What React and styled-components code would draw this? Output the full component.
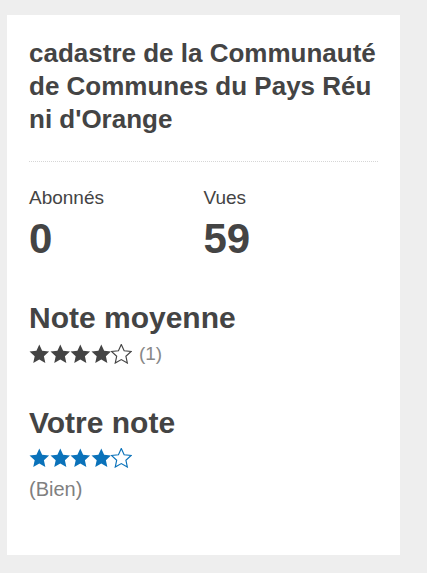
import React from 'react';
import styled, { createGlobalStyle } from 'styled-components';

const GlobalStyle = createGlobalStyle`
  body {
    margin: 0;
    background: #eeeeee;
    font-family: "Liberation Sans", Arial, sans-serif;
    color: #444444;
  }
`;

const Page = styled.div`
  padding: 15px 0 0 7px;
  min-height: 573px;
  box-sizing: border-box;
`;

const Card = styled.div`
  width: 393px;
  height: 540px;
  box-sizing: border-box;
  background: #ffffff;
  padding: 22px 22px;
`;

const Title = styled.h1`
  margin: 0;
  font-size: 26px;
  line-height: 33px;
  font-weight: bold;
  word-break: break-all;
  padding-bottom: 25px;
  border-bottom: 1px dotted #d6d6d6;
`;

const Stats = styled.div`
  display: grid;
  grid-template-columns: 1fr 1fr;
  margin-top: 25px;
`;

const Stat = styled.div`
  display: flex;
  flex-direction: column;
`;

const Label = styled.span`
  font-size: 19px;
  line-height: 22px;
`;

const Count = styled.span`
  font-size: 42px;
  line-height: 48px;
  font-weight: bold;
  margin-top: 6px;
`;

const Section = styled.div`
  margin-top: ${p => p.$top}px;
`;

const Heading = styled.h2`
  margin: 0;
  font-size: 30px;
  line-height: 34px;
  font-weight: bold;
`;

const StarRow = styled.div`
  display: flex;
  align-items: center;
  margin-top: 8px;
`;

const Stars = styled.div`
  display: flex;
  color: ${p => p.$color};
`;

const Muted = styled.span`
  font-size: 19px;
  color: #888888;
  margin-left: 7px;
  line-height: 22px;
`;

const Caption = styled.div`
  font-size: 20px;
  color: #808080;
  margin-top: 9px;
  line-height: 24px;
`;

const STAR = '50,0 63.81,30.99 97.55,34.55 72.35,57.26 79.39,90.45 50,73.5 20.61,90.45 27.65,57.26 2.45,34.55 36.19,30.99';

const Star = ({ filled }) => (
  <svg width="20.6" height="20" viewBox="0 -2 100 97">
    <polygon
      points={STAR}
      fill={filled ? 'currentColor' : 'none'}
      stroke={filled ? 'none' : 'currentColor'}
      strokeWidth="5.5"
      strokeLinejoin="miter"
    />
  </svg>
);

const Rating = ({ value, color }) => (
  <Stars $color={color}>
    {[1, 2, 3, 4, 5].map(i => <Star key={i} filled={i <= value} />)}
  </Stars>
);

const App = () => (
  <Page>
    <GlobalStyle />
    <Card>
      <Title>cadastre de la Communauté de Communes du Pays Réuni d'Orange</Title>
      <Stats>
        <Stat>
          <Label>Abonnés</Label>
          <Count>0</Count>
        </Stat>
        <Stat>
          <Label>Vues</Label>
          <Count>59</Count>
        </Stat>
      </Stats>
      <Section $top={38}>
        <Heading>Note moyenne</Heading>
        <StarRow>
          <Rating value={4} color="#444444" />
          <Muted>(1)</Muted>
        </StarRow>
      </Section>
      <Section $top={41}>
        <Heading>Votre note</Heading>
        <StarRow>
          <Rating value={4} color="#0a72ba" />
        </StarRow>
        <Caption>(Bien)</Caption>
      </Section>
    </Card>
  </Page>
);

export default App;
